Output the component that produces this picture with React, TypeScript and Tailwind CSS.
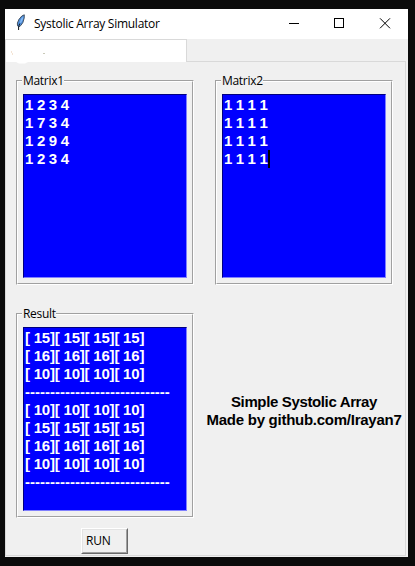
import React from "react";

const uiFont = "font-['Open_Sans','Noto_Sans',sans-serif] text-[12px] text-black";
const monoFont = "font-['Liberation_Sans',Arial,sans-serif] text-[15px] leading-[18px] font-bold";

type PanelProps = { title: string; titleClass: string; children: React.ReactNode };

function Panel({ title, titleClass, children }: PanelProps) {
  return (
    <section className="relative h-[205px] w-[178px] shrink-0 border border-t-[#a0a0a0] border-l-[#a0a0a0] border-r-white border-b-white">
      <div className="h-full w-full border border-t-white border-l-white border-r-[#a0a0a0] border-b-[#a0a0a0] pl-[5px] pt-[12px]">
        <div className="h-[184px] w-[164px] border border-t-[#000080] border-l-[#000080] border-r-[#8080ff] border-b-[#8080ff] bg-[#0000ff] pl-[1px] pt-[1px] text-white">
          {children}
        </div>
      </div>
      <h2 className={`absolute left-[5px] top-[-9px] h-[18px] bg-[#f0f0f0] pl-px leading-[18px] whitespace-nowrap ${uiFont} ${titleClass}`}>
        {title}
      </h2>
    </section>
  );
}

function Lines({ rows, tracking }: { rows: string[]; tracking: string }) {
  return (
    <>
      {rows.map((row, i) => (
        <div key={i} className={`h-[18px] whitespace-pre ${monoFont} ${row[0] === "-" ? "tracking-normal" : tracking}`}>
          {row}
        </div>
      ))}
    </>
  );
}

const divider = "-".repeat(29);
const result = [
  "[ 15][ 15][ 15][ 15]",
  "[ 16][ 16][ 16][ 16]",
  "[ 10][ 10][ 10][ 10]",
  divider,
  "[ 10][ 10][ 10][ 10]",
  "[ 15][ 15][ 15][ 15]",
  "[ 16][ 16][ 16][ 16]",
  "[ 10][ 10][ 10][ 10]",
  divider,
];

function Feather() {
  return (
    <svg width="10" height="17" viewBox="0 0 10 17" className="block">
      <path d="M8.3 .8 5.8 2 3 5.3 1.4 9 1.5 11.8 2.8 13 4.8 11.5 6.9 8.5 8.2 4Z" fill="#4f8fdc" stroke="#3a4653" strokeWidth=".9" />
      <path d="M7.3 2.5 5 5 3.7 9.3 5.5 8 7 5Z" fill="#86bbf5" />
      <path d="M3.8 9.5 2.6 12.5V16" fill="none" stroke="#10161d" strokeWidth="1" />
    </svg>
  );
}

export default function App() {
  return (
    <div className="h-[566px] w-[415px] overflow-hidden bg-[#0b0b0b] pl-[5px] pt-[9px]">
      <main className="flex h-[548px] w-[403px] flex-col bg-[#f0f0f0]">
        <header className="flex h-[30px] shrink-0 items-start bg-white">
          <div className="pl-[11px] pt-[5px]"><Feather /></div>
          <h1 className={`ml-[8px] pt-[6px] leading-[18px] whitespace-nowrap tracking-[-0.27px] ${uiFont}`}>Systolic Array Simulator</h1>
          <svg className="ml-auto mr-[17px] mt-[9px] block" width="103" height="11" viewBox="0 0 103 11" fill="none" stroke="black" shapeRendering="crispEdges">
            <path d="M1 5.5H11" />
            <rect x="46.5" y=".5" width="9" height="9" />
            <path d="M92 .3 102 10.3M102 .3 92 10.3" shapeRendering="auto" />
          </svg>
        </header>
        <nav className="flex h-[23px] shrink-0">
          <div className="h-[23px] w-[182px] border border-b-0 border-[#d9d9d9] bg-white px-[5px] pt-[12px]">
            <svg width="170" height="11" viewBox="0 0 170 11" className="block" overflow="visible">
              <path d="M0 0h1M1 2h1" stroke="#e9c9a8" />
              <path d="M32 1.5h2" stroke="#c9c9b8" />
              <path d="M5 10h12l-3 1.5H8Z" fill="white" />
            </svg>
          </div>
          <div className="mr-[2px] flex-1 border-b border-[#d9d9d9]" />
        </nav>
        <div className="mr-[2px] mb-px flex-1 border-b border-l border-r border-[#d9d9d9] pl-[10px] pt-[18px]">
          <div className="flex gap-[21px]">
            <Panel title="Matrix1" titleClass="w-[42px] tracking-[-0.3px]">
              <Lines rows={["1 2 3 4", "1 7 3 4", "1 2 9 4", "1 2 3 4"]} tracking="tracking-[-0.3px]" />
            </Panel>
            <Panel title="Matrix2" titleClass="w-[42px] tracking-[-0.3px]">
              <div className="relative">
                <Lines rows={["1 1 1 1", "1 1 1 1", "1 1 1 1", "1 1 1 1"]} tracking="tracking-[-0.35px]" />
                <span className="absolute left-[44px] top-[54px] h-[18px] w-[2px] bg-black" />
              </div>
            </Panel>
          </div>
          <div className="mt-[28px] flex">
            <Panel title="Result" titleClass="w-[34px] tracking-[-0.3px]">
              <Lines rows={result} tracking="tracking-[-0.21px]" />
            </Panel>
            <div className={`ml-[11px] mt-[80px] w-[198px] text-center whitespace-nowrap text-black ${monoFont}`}>
              <p className="tracking-[-0.36px]">Simple Systolic Array</p>
              <p className="tracking-[-0.26px]">Made by github.com/Irayan7</p>
            </div>
          </div>
          <button className={`ml-[65px] mt-[10px] block h-[26px] w-[47px] border border-t-white border-l-white border-r-[#696969] border-b-[#696969] ${uiFont}`}>
            <span className="block h-full w-full border border-t-[#e3e3e3] border-l-[#e3e3e3] border-r-[#a0a0a0] border-b-[#a0a0a0] pl-[3px] text-left leading-[22px] tracking-[-0.2px]">RUN</span>
          </button>
        </div>
      </main>
    </div>
  );
}
